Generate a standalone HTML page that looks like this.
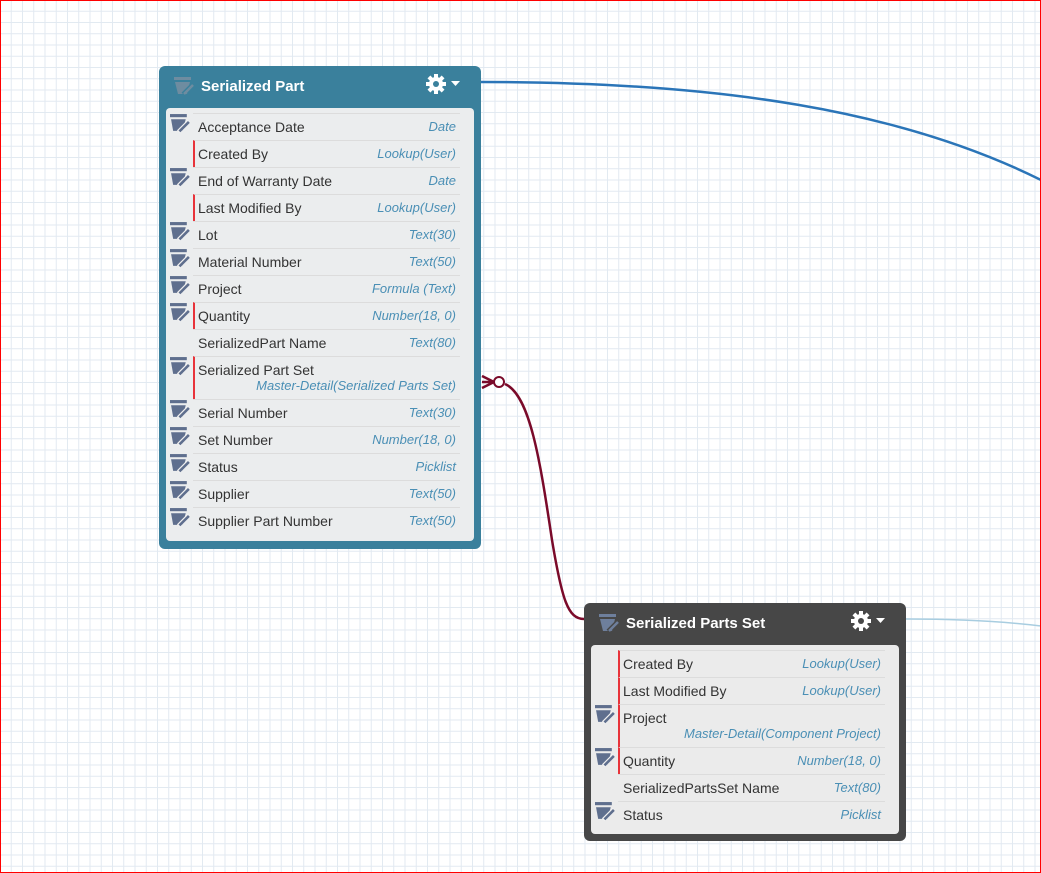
<!DOCTYPE html>
<html><head><meta charset="utf-8"><style>
body{margin:0;width:1041px;height:873px;overflow:hidden;position:relative;font-family:"Liberation Sans",Arial,sans-serif;
background-color:#fff;
background-image:linear-gradient(#e2e9f1 1px,transparent 1px),linear-gradient(90deg,#e2e9f1 1px,transparent 1px);
background-size:11.25px 11.25px;background-position:-0.5px -0.5px;}
.frame{position:absolute;left:0;top:0;width:1039px;height:871px;border:1px solid #f00;z-index:10;pointer-events:none}
.card{position:absolute;border-radius:6px}
.body{position:absolute;background:rgba(241,241,241,0.97);border-radius:4px}
.row{position:absolute;height:27px;border-top:1px solid #dcdcdc;font-size:14px;color:#333}
.row .n{position:absolute;left:5px;top:5px;white-space:nowrap}
.row.red .n{left:3px}
.row .t{position:absolute;right:4px;top:5px;font-style:italic;font-size:13px;color:#4a8fb5;white-space:nowrap}
.row.two .t{top:21px}
.red{border-left:2px solid #e8333a}
svg.ic{width:21px;height:19px;display:block}
</style></head><body>
<div class="frame"></div>
<svg width="1041" height="873" style="position:absolute;left:0;top:0">
<defs>
<g id="gear"><g fill="#fff"><circle r="7"/><g id="tt"><rect x="-2" y="-10" width="4" height="20"/><rect x="-10" y="-2" width="20" height="4"/></g><use href="#tt" transform="rotate(45)"/></g></g>
</defs>
<path d="M481 82 C 720 82, 900 110, 1041 180" fill="none" stroke="#2b75b8" stroke-width="2.5"/>
<path d="M906 619 C 960 619, 1000 621, 1041 626" fill="none" stroke="#a8cde0" stroke-width="1.5"/>
<path d="M505 384 C 530 395, 540 460, 552 540 C 562 600, 568 619, 584 619" fill="none" stroke="#7a0a2a" stroke-width="2.5"/>
<path d="M482 376 L494 382 M482 382 L494 382 M482 388 L494 382" stroke="#7a0a2a" stroke-width="2.5" fill="none"/>
<circle cx="499" cy="382" r="5" fill="#fff" stroke="#7a0a2a" stroke-width="2"/>
</svg>

<div class="card" style="left:159px;top:66px;width:322px;height:483px;background:#3a809c"></div>
<svg style="position:absolute;left:174px;top:77px" width="22" height="20"><rect x="0" y="0" width="17" height="3" fill="#6e8ca0"/><path d="M1 5 H16 L13 17 H4 Z" fill="#6e8ca0"/><path d="M9 17 L19 7" stroke="#3a809c" stroke-width="4"/><path d="M10 17 L19 8" stroke="#6e8ca0" stroke-width="2.5"/></svg>
<div style="position:absolute;left:201px;top:78px;color:#fff;font-weight:bold;font-size:15px">Serialized Part</div>
<svg style="position:absolute;left:425px;top:73px" width="22" height="22"><g transform="translate(11,11)"><g fill="#fff"><circle r="7"/><rect x="-2" y="-10" width="4" height="20"/><rect x="-10" y="-2" width="20" height="4"/><g transform="rotate(45)"><rect x="-2" y="-10" width="4" height="20"/><rect x="-10" y="-2" width="20" height="4"/></g></g><circle r="3" fill="#3a809c"/></g></svg>
<svg style="position:absolute;left:451px;top:81px" width="9" height="6"><path d="M0 0 H9 L4.5 5 Z" fill="#fff"/></svg>
<div class="body" style="left:166px;top:108px;width:308px;height:433px"></div>

<div class="card" style="left:584px;top:603px;width:322px;height:238px;background:#474747"></div>
<svg style="position:absolute;left:599px;top:614px" width="22" height="20"><rect x="0" y="0" width="17" height="3" fill="#6e7f9c"/><path d="M1 5 H16 L13 17 H4 Z" fill="#6e7f9c"/><path d="M9 17 L19 7" stroke="#474747" stroke-width="4"/><path d="M10 17 L19 8" stroke="#6e7f9c" stroke-width="2.5"/></svg>
<div style="position:absolute;left:626px;top:615px;color:#fff;font-weight:bold;font-size:15px">Serialized Parts Set</div>
<svg style="position:absolute;left:850px;top:610px" width="22" height="22"><g transform="translate(11,11)"><g fill="#fff"><circle r="7"/><rect x="-2" y="-10" width="4" height="20"/><rect x="-10" y="-2" width="20" height="4"/><g transform="rotate(45)"><rect x="-2" y="-10" width="4" height="20"/><rect x="-10" y="-2" width="20" height="4"/></g></g><circle r="3" fill="#474747"/></g></svg>
<svg style="position:absolute;left:876px;top:618px" width="9" height="6"><path d="M0 0 H9 L4.5 5 Z" fill="#fff"/></svg>
<div class="body" style="left:591px;top:645px;width:308px;height:189px"></div>

<div id="rows"></div>
<script>
var ic='<svg class="ic" viewBox="0 0 20 18"><rect x="0" y="0" width="16" height="3" fill="#5f6f8e"/><path d="M1 5 H15 L12 16 H3 Z" fill="#5f6f8e"/><path d="M8 17 L18 7" stroke="#f1f1f1" stroke-width="4"/><path d="M9 16.5 L18 7.5" stroke="#5f6f8e" stroke-width="2.5"/></svg>';
function rows(x,ix,data){var h='';data.forEach(function(d){var two=d[4],top=d[5],ht=two?42:27;
if(d[3])h+='<div style="position:absolute;left:'+ix+'px;top:'+(top+1)+'px">'+ic+'</div>';
h+='<div class="row'+(d[2]?' red':'')+(two?' two':'')+'" style="left:'+x+'px;top:'+top+'px;width:'+(d[2]?265:267)+'px;height:'+ht+'px"><span class="n">'+d[0]+'</span><span class="t">'+d[1]+'</span></div>';});return h;}
function mk(list,start){var y=start;return list.map(function(d){var r=[d[0],d[1],d[2],d[3],d[4]?1:0,y];y+=d[4]?43:27;return r;});}
var a=mk([["Acceptance Date","Date",0,1],["Created By","Lookup(User)",1,0],["End of Warranty Date","Date",0,1],["Last Modified By","Lookup(User)",1,0],["Lot","Text(30)",0,1],["Material Number","Text(50)",0,1],["Project","Formula (Text)",0,1],["Quantity","Number(18, 0)",1,1],["SerializedPart Name","Text(80)",0,0],["Serialized Part Set","Master-Detail(Serialized Parts Set)",1,1,1],["Serial Number","Text(30)",0,1],["Set Number","Number(18, 0)",0,1],["Status","Picklist",0,1],["Supplier","Text(50)",0,1],["Supplier Part Number","Text(50)",0,1]],113);
var b=mk([["Created By","Lookup(User)",1,0],["Last Modified By","Lookup(User)",1,0],["Project","Master-Detail(Component Project)",1,1,1],["Quantity","Number(18, 0)",1,1],["SerializedPartsSet Name","Text(80)",0,0],["Status","Picklist",0,1]],650);
document.getElementById('rows').innerHTML=rows(193,170,a)+rows(618,595,b);
</script>
</body></html>
